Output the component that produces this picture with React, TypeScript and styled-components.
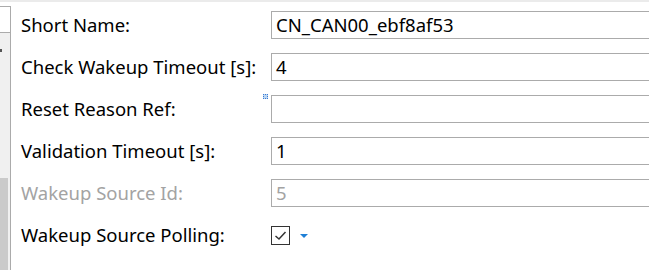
import React from "react";
import styled, { createGlobalStyle } from "styled-components";

const Global = createGlobalStyle`
  html, body { margin: 0; padding: 0; background: #ffffff; }
  body { width: 649px; height: 270px; overflow: hidden; font-family: "Noto Sans", "Open Sans", sans-serif; }
  #root { width: 649px; height: 270px; }
`;

const Page = styled.div`
  width: 649px;
  height: 270px;
  display: flex;
  flex-direction: column;
  overflow: hidden;
  background: #fff;
`;

const TopStrip = styled.div`
  height: 2px;
  flex: none;
  background: #ebebeb;
`;

const Main = styled.div`
  flex: 1;
  display: flex;
  min-height: 0;
`;

const Sidebar = styled.div`
  width: 10px;
  flex: none;
  margin-top: 4px;
  border-top: 1px solid #ababab;
  border-right: 1px solid #ababab;
  display: flex;
  flex-direction: column;
`;

const SideHeader = styled.div`
  height: 25px;
  flex: none;
  border-bottom: 1px solid #ababab;
  background: #fff;
`;

const SideBody = styled.div`
  flex: 1;
  display: flex;
  flex-direction: column;
  background: #f0f0f0;
`;

const Track = styled.div`
  flex: 1;
  position: relative;
`;

const Mark = styled.div`
  position: absolute;
  left: 0;
  top: 16px;
  width: 2px;
  height: 3px;
  background: #555;
`;

const Thumb = styled.div`
  height: 92px;
  width: 8px;
  flex: none;
  background: #cacaca;
`;

const Form = styled.div`
  flex: 1;
  display: flex;
  flex-direction: column;
  gap: 14px;
  padding: 9px 0 0 10px;
  min-width: 0;
`;

const Row = styled.div`
  display: grid;
  grid-template-columns: 250px 1fr;
  align-items: center;
  height: 28px;
`;

const Label = styled.div<{ $disabled?: boolean }>`
  font-size: 18.5px;
  color: ${(p) => (p.$disabled ? "#a3a3a3" : "#000")};
  white-space: nowrap;
  line-height: 28px;
`;

const FieldWrap = styled.div`
  position: relative;
  height: 28px;
`;

const Input = styled.div<{ $disabled?: boolean }>`
  box-sizing: border-box;
  height: 28px;
  width: 420px;
  border: 1px solid #ababab;
  padding-left: 4px;
  font-size: 18.5px;
  line-height: 26px;
  color: ${(p) => (p.$disabled ? "#a3a3a3" : "#000")};
  white-space: nowrap;
  background: #fff;
`;

const Marker = styled.div`
  position: absolute;
  left: -8px;
  top: -1px;
  width: 5px;
  height: 5px;
  box-sizing: border-box;
  border: 1px dotted #3a7bd5;
  background: #bcd6f2;
`;

const CheckRow = styled.div`
  display: flex;
  align-items: center;
  gap: 10px;
  height: 28px;
`;

const CheckBox = styled.div`
  box-sizing: border-box;
  width: 19px;
  height: 19px;
  border: 1px solid #333;
  display: flex;
  align-items: center;
  justify-content: center;
  background: #fff;
`;

const Arrow = styled.div`
  width: 0;
  height: 0;
  border-left: 4px solid transparent;
  border-right: 4px solid transparent;
  border-top: 4px solid #1e7fd6;
  margin-top: 1px;
`;

const rows: { label: string; value: string; disabled?: boolean; marker?: boolean }[] = [
  { label: "Short Name:", value: "CN_CAN00_ebf8af53" },
  { label: "Check Wakeup Timeout [s]:", value: "4" },
  { label: "Reset Reason Ref:", value: "", marker: true },
  { label: "Validation Timeout [s]:", value: "1" },
  { label: "Wakeup Source Id:", value: "5", disabled: true },
];

export default function App() {
  return (
    <>
      <Global />
      <Page>
        <TopStrip />
        <Main>
          <Sidebar>
            <SideHeader />
            <SideBody>
              <Track>
                <Mark />
              </Track>
              <Thumb />
            </SideBody>
          </Sidebar>
          <Form>
            {rows.map((r) => (
              <Row key={r.label}>
                <Label $disabled={r.disabled}>{r.label}</Label>
                <FieldWrap>
                  {r.marker && <Marker />}
                  <Input $disabled={r.disabled}>{r.value}</Input>
                </FieldWrap>
              </Row>
            ))}
            <Row>
              <Label>Wakeup Source Polling:</Label>
              <CheckRow>
                <CheckBox>
                  <svg width="13" height="11" viewBox="0 0 13 11">
                    <path d="M1.5 6 L5 9 L11.5 2" fill="none" stroke="#333" strokeWidth="1.5" />
                  </svg>
                </CheckBox>
                <Arrow />
              </CheckRow>
            </Row>
          </Form>
        </Main>
      </Page>
    </>
  );
}
